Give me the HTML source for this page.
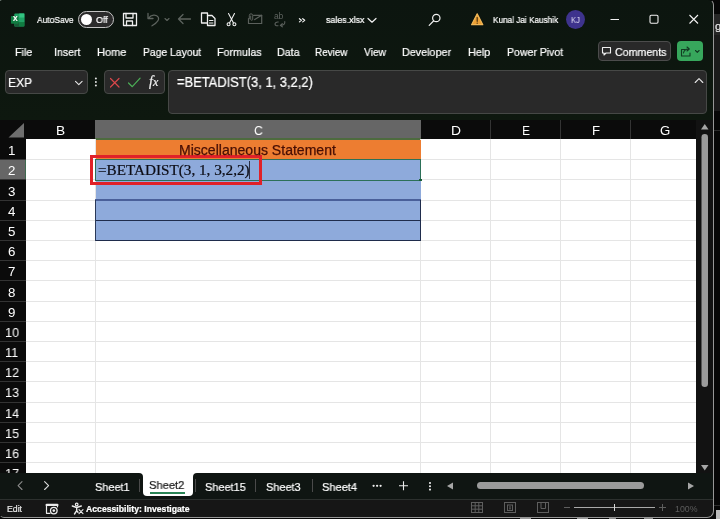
<!DOCTYPE html>
<html>
<head>
<meta charset="utf-8">
<title>sales.xlsx - Excel</title>
<style>
html,body{margin:0;padding:0;}
body{width:720px;height:519px;overflow:hidden;background:#070707;position:relative;font-family:"Liberation Sans",sans-serif;color:#fff;}
.abs{position:absolute;}
#win{position:absolute;left:0;top:0;width:713px;height:517px;background:linear-gradient(180deg,#0c150f 0px,#0e180f 120px);border-radius:2px 5px 6px 4px;overflow:hidden;}
#winborder{position:absolute;left:-1px;top:-1px;width:713px;height:517px;border:1px solid #979797;border-left-color:transparent;border-top-color:transparent;border-radius:3px 6px 7px 5px;box-sizing:content-box;pointer-events:none;}
.t{position:absolute;white-space:nowrap;line-height:1;transform-origin:0 0;will-change:transform;-webkit-text-stroke:0.22px;}
.box{position:absolute;background:#292929;border:1px solid #464846;border-radius:4px;box-sizing:border-box;}
.vl{position:absolute;top:139px;width:1px;height:334px;background:#e5e5e5;}
.hl{position:absolute;left:26px;width:670px;height:1px;background:#e5e5e5;}
.sep{position:absolute;top:479px;width:1px;height:13px;background:#4a4a4a;}
</style>
</head>
<body>
<!-- desktop / other window peeking at the right edge -->
<div class="abs" style="left:714px;top:14px;width:6px;height:21px;background:#262626;"></div>
<div class="abs" style="left:714px;top:35px;width:6px;height:76px;background:#1b1b1b;"></div>
<div class="abs" style="left:714px;top:130px;width:6px;height:1px;background:#2a2a2a;"></div>
<div class="abs" style="left:714px;top:505px;width:6px;height:1px;background:#2e2e2e;"></div>
<div class="abs" style="left:716px;top:510px;width:4px;height:9px;background:#bdbdbd;"></div>
<div class="t" style="left:714.5px;top:20.500px;font-size:11.5px;color:#e8e8e8">g</div>
<div class="abs" style="left:0;top:0;width:2px;height:1px;background:#8d9a92;"></div>
<div class="abs" style="left:520px;top:518px;width:11px;height:1px;background:#9a9a9a;"></div>
<div class="abs" style="left:577px;top:518px;width:11px;height:1px;background:#9a9a9a;"></div>
<div class="abs" style="left:609px;top:518px;width:7px;height:1px;background:#8a8a8a;"></div>
<div class="abs" style="left:644px;top:518px;width:9px;height:1px;background:#8a8a8a;"></div>
<div id="win">
<!-- title bar -->
<svg class="abs" style="left:10.400px;top:11.600px" width="16.300" height="16.300" viewBox="0 0 17 17">
  <rect x="4.5" y="1.5" width="10.500" height="13.500" rx="1" fill="#21a366"/>
  <rect x="9.700" y="1.500" width="5.300" height="4.500" fill="#33c481"/>
  <rect x="9.700" y="6" width="5.300" height="4.500" fill="#21a366"/>
  <rect x="9.700" y="10.500" width="5.300" height="4.500" fill="#107c41"/>
  <rect x="4.500" y="10.500" width="5.200" height="4.500" fill="#185c37"/>
  <rect x="1" y="4.300" width="8" height="8" rx="0.800" fill="#107c41"/>
</svg>
<div class="t" style="left:12.700px;top:16.400px;font-size:6.800px;font-weight:bold;color:#fff">X</div>
<!-- autosave toggle -->
<div class="abs" style="left:78px;top:11px;width:36px;height:17px;border:1px solid #c4c4c4;border-radius:9px;box-sizing:border-box;background:#2b2b2b;"></div>
<div class="abs" style="left:80.800px;top:13.500px;width:11.500px;height:11.500px;border-radius:6px;background:#fff;"></div>
<!-- quick access icons -->
<svg class="abs" style="left:120px;top:10px" width="190" height="20" fill="none" stroke-linecap="round" stroke-linejoin="round">
  <!-- save -->
  <g stroke="#f0f0f0" stroke-width="1.300">
    <path d="M3.500 3.500h10.500l2.500 0v12h-13z"/>
    <path d="M6 3.500v4.500h7v-4.500"/>
    <path d="M6.500 15.500v-4.500h6v4.500"/>
  </g>
  <!-- undo -->
  <g stroke="#5d635e" stroke-width="1.300">
    <path d="M28 3.500v5h5"/>
    <path d="M28.500 8.300c2.500-4 8-4.300 9.800-1c1.500 3-1.500 5.700-6.300 8.500"/>
    <path d="M45 8.500l2 2l2-2" stroke-width="1.100"/>
  </g>
  <!-- back arrow -->
  <g stroke="#5d635e" stroke-width="1.300">
    <path d="M58.500 9h12M63 4.500l-4.500 4.500l4.500 4.500"/>
  </g>
  <!-- copy / paste -->
  <g stroke="#f0f0f0" stroke-width="1.300">
    <path d="M87 13h-5.500v-10h6v2.500"/>
    <path d="M87.500 5.500h4.500l3 3v7h-7.500z"/>
    <path d="M89.500 10.500h3.500M89.500 13h3.500" stroke-width="1"/>
  </g>
  <!-- scissors -->
  <g stroke="#f0f0f0" stroke-width="1.100">
    <path d="M108.500 3.500l5 9.500M114.500 3.500l-5 9.500"/>
    <circle cx="108.600" cy="14.300" r="1.500"/><circle cx="114.400" cy="14.300" r="1.500"/>
  </g>
  <!-- mail -->
  <g stroke="#5b605c" stroke-width="1.200">
    <path d="M133.500 5.300h8.200v8.200h-13.200v-5"/>
    <path d="M141.700 5.300l-7 4.300"/>
    <path d="M129.300 8.800v-3.300a1.700 1.700 0 0 1 3.400 0v3.800a1 1 0 0 1-2 0v-3.300" stroke-width="1"/>
  </g>
  <!-- translate -->
  <g stroke="#5b605c" stroke-width="1.100">
    <path d="M158.300 12c-1.800-.2-3.300.6-3.300 2c0 1.300 1.400 2 3 1.700"/>
    <path d="M160.300 15.300c3.500.3 4.800-1.500 4.500-3.700M160.300 15.300l2-1.700M160.300 15.300l2 1.500"/>
  </g>
  <!-- overflow >> -->
  <g stroke="#f2f2f2" stroke-width="1.150">
    <path d="M179.400 8.700l2 1.600l-2 1.600M182.700 8.700l2 1.600l-2 1.600"/>
  </g>
</svg>
<div class="t" style="left:273.800px;top:12px;font-size:8.500px;color:#5f6460;-webkit-text-stroke:0;letter-spacing:-0.2px">ab</div>
<!-- filename chevron, search, warning -->
<svg class="abs" style="left:360px;top:8px" width="130" height="22" fill="none" stroke-linecap="round" stroke-linejoin="round">
  <path d="M8 10.500l4 3.700l4-3.700" stroke="#f0f0f0" stroke-width="1.200"/>
  <circle cx="76.300" cy="10" r="3.700" stroke="#f0f0f0" stroke-width="1.200"/>
  <path d="M73.500 13l-4.300 4.300" stroke="#f0f0f0" stroke-width="1.200"/>
  <path d="M117.200 5.800l5.600 10.900h-11.200z" fill="#eda034" stroke="#f2b95a" stroke-width="1.200"/>
  <path d="M117.200 9.500v3.800" stroke="#4a3210" stroke-width="1.200"/><circle cx="117.200" cy="15.200" r="0.650" fill="#4a3210"/>
</svg>
<div class="abs" style="left:565.600px;top:9.600px;width:19.800px;height:19.800px;border-radius:10px;background:#3e338d;"></div>
<!-- window controls -->
<svg class="abs" style="left:605px;top:10px" width="100" height="20" fill="none" stroke="#f2f2f2" stroke-width="1.100">
  <path d="M5.500 9.500h8.500"/>
  <rect x="45" y="5.300" width="8" height="8" rx="1.200"/>
  <path d="M84.500 5l8.500 8.500M93 5l-8.500 8.500"/>
</svg>

<!-- ribbon tabs row -->
<div class="box" style="left:598px;top:41px;width:73px;height:20px;background:#292929;border-color:#4c4c4c;border-radius:4px"></div>
<svg class="abs" style="left:600px;top:45px" width="14" height="12" fill="none" stroke="#f0f0f0" stroke-width="1.100" stroke-linejoin="round"><path d="M2.500 2.500h8v5.500h-4.500l-2 2v-2h-1.500z"/></svg>
<div class="abs" style="left:677.300px;top:41px;width:25.700px;height:20px;background:#37a75c;border-radius:4px;"></div>
<svg class="abs" style="left:679px;top:45px" width="24" height="13" fill="none" stroke="#123a22" stroke-width="1.100" stroke-linejoin="round" stroke-linecap="round">
  <path d="M6 4.500h-3.500v6.500h8.500v-3"/><path d="M4.500 8c.5-2.500 2.500-4 5-4M8 2l2.300 2l-2.300 2"/>
  <path d="M16.500 5.500l1.800 1.800l1.800-1.800"/>
</svg>

<!-- formula bar -->
<div class="box" style="left:5px;top:70px;width:83px;height:24px;"></div>
<svg class="abs" style="left:73px;top:78px" width="12" height="10" fill="none" stroke="#e6e6e6" stroke-width="1.100" stroke-linecap="round" stroke-linejoin="round"><path d="M2.500 3.300l3.300 3.300l3.300-3.300"/></svg>
<svg class="abs" style="left:93px;top:76px" width="6" height="12"><circle cx="2.900" cy="2.600" r="1" fill="#e2e2e2"/><circle cx="2.900" cy="6.100" r="1" fill="#e2e2e2"/><circle cx="2.900" cy="9.600" r="1" fill="#e2e2e2"/></svg>
<div class="box" style="left:104px;top:70px;width:61px;height:24px;"></div>
<svg class="abs" style="left:106px;top:74px" width="40" height="16" fill="none" stroke-width="1.200" stroke-linecap="round" stroke-linejoin="round">
  <path d="M4.500 4.500l8.500 8.500M13 4.500l-8.500 8.500" stroke="#d9474a"/>
  <path d="M22.500 9l3.800 3.700l7.800-8.500" stroke="#4cae57"/>
</svg>
<div class="t" style="left:148.500px;top:74.500px;font-size:14px;font-style:italic;font-family:'Liberation Serif',serif;color:#f0f0f0">f<span style="font-size:12px">x</span></div>
<div class="box" style="left:167.500px;top:70px;width:539.500px;height:43.500px;"></div>
<svg class="abs" style="left:693px;top:76px" width="12" height="9" fill="none" stroke="#e6e6e6" stroke-width="1.100" stroke-linecap="round" stroke-linejoin="round"><path d="M2.200 6.500l3.800-3.800l3.800 3.800"/></svg>
<!-- grid -->
<div class="abs" style="left:0;top:120px;width:696px;height:353px;background:#fff;"></div>
<div class="abs" style="left:0;top:120px;width:713px;height:19px;background:#0b0b0b;"></div>
<div class="abs" style="left:0;top:139px;width:26px;height:334px;background:#0b0b0b;"></div>
<div class="abs" style="left:95px;top:120px;width:1px;height:19px;background:#343434"></div>
<div class="abs" style="left:420px;top:120px;width:1px;height:19px;background:#343434"></div>
<div class="abs" style="left:490px;top:120px;width:1px;height:19px;background:#343434"></div>
<div class="abs" style="left:560px;top:120px;width:1px;height:19px;background:#343434"></div>
<div class="abs" style="left:630px;top:120px;width:1px;height:19px;background:#343434"></div>
<div class="abs" style="left:95px;top:120px;width:326px;height:20px;background:#666666;border-bottom:2px solid #4d6b3e;box-sizing:border-box"></div>
<svg class="abs" style="left:0;top:120px" width="26" height="19"><polygon points="24,3 24,17.5 8.5,17.5" fill="#6e6e6e"/></svg>
<div class="abs" style="left:0;top:159px;width:26px;height:20px;background:#666666;border-right:1px solid #3f6a50;box-sizing:border-box"></div>
<div class="abs" style="left:0;top:159px;width:26px;height:1px;background:#333"></div>
<div class="abs" style="left:0;top:179px;width:26px;height:1px;background:#333"></div>
<div class="abs" style="left:0;top:200px;width:26px;height:1px;background:#333"></div>
<div class="abs" style="left:0;top:220px;width:26px;height:1px;background:#333"></div>
<div class="abs" style="left:0;top:240px;width:26px;height:1px;background:#333"></div>
<div class="abs" style="left:0;top:260px;width:26px;height:1px;background:#333"></div>
<div class="abs" style="left:0;top:280px;width:26px;height:1px;background:#333"></div>
<div class="abs" style="left:0;top:301px;width:26px;height:1px;background:#333"></div>
<div class="abs" style="left:0;top:321px;width:26px;height:1px;background:#333"></div>
<div class="abs" style="left:0;top:341px;width:26px;height:1px;background:#333"></div>
<div class="abs" style="left:0;top:361px;width:26px;height:1px;background:#333"></div>
<div class="abs" style="left:0;top:381px;width:26px;height:1px;background:#333"></div>
<div class="abs" style="left:0;top:402px;width:26px;height:1px;background:#333"></div>
<div class="abs" style="left:0;top:422px;width:26px;height:1px;background:#333"></div>
<div class="abs" style="left:0;top:442px;width:26px;height:1px;background:#333"></div>
<div class="abs" style="left:0;top:462px;width:26px;height:1px;background:#333"></div>
<div class="vl" style="left:95px"></div>
<div class="vl" style="left:420px"></div>
<div class="vl" style="left:490px"></div>
<div class="vl" style="left:560px"></div>
<div class="vl" style="left:630px"></div>
<div class="hl" style="top:159px"></div>
<div class="hl" style="top:179px"></div>
<div class="hl" style="top:200px"></div>
<div class="hl" style="top:220px"></div>
<div class="hl" style="top:240px"></div>
<div class="hl" style="top:260px"></div>
<div class="hl" style="top:280px"></div>
<div class="hl" style="top:301px"></div>
<div class="hl" style="top:321px"></div>
<div class="hl" style="top:341px"></div>
<div class="hl" style="top:361px"></div>
<div class="hl" style="top:381px"></div>
<div class="hl" style="top:402px"></div>
<div class="hl" style="top:422px"></div>
<div class="hl" style="top:442px"></div>
<div class="hl" style="top:462px"></div>
<!-- cells -->
<div class="abs" style="left:96px;top:139.500px;width:325px;height:20px;background:#ed7d31;"></div>
<div class="abs" style="left:96px;top:159px;width:325px;height:82px;background:#8eaadb;"></div>
<div class="abs" style="left:95px;top:199px;width:326px;height:1.500px;background:#4a609a;"></div>
<div class="abs" style="left:95px;top:220px;width:326px;height:1px;background:#1f2c4c;"></div>
<div class="abs" style="left:95px;top:240px;width:326px;height:1px;background:#1f2c4c;"></div>
<div class="abs" style="left:95px;top:200px;width:1px;height:41px;background:#2a3858;"></div>
<div class="abs" style="left:420px;top:200px;width:1px;height:41px;background:#1f2c4c;"></div>
<div class="abs" style="left:95px;top:159px;width:326px;height:22px;border:1.500px solid #2c7058;border-right-width:1px;box-sizing:border-box;"></div>
<div class="abs" style="left:419px;top:178.500px;width:3px;height:2.500px;background:#1b5e3a;"></div>
<div class="abs" style="left:249px;top:161px;width:1px;height:17.500px;background:#2a2f45;"></div>
<div class="abs" style="left:90px;top:154.500px;width:172px;height:30.500px;border:3px solid #e02128;box-sizing:border-box;"></div>
<div class="t" style="left:56.27px;top:123.7px;font-size:13.2px;color:#fff;font-family:'Liberation Sans',sans-serif;-webkit-text-stroke:0;transform:scaleX(1.04)">B</div>
<div class="t" style="left:254.14px;top:123.7px;font-size:13.2px;color:#fff;font-family:'Liberation Sans',sans-serif;-webkit-text-stroke:0;transform:scaleX(0.9293)">C</div>
<div class="t" style="left:450.75px;top:123.7px;font-size:13.2px;color:#fff;font-family:'Liberation Sans',sans-serif;-webkit-text-stroke:0;transform:scaleX(1.05)">D</div>
<div class="t" style="left:521.79px;top:123.7px;font-size:13.2px;color:#fff;font-family:'Liberation Sans',sans-serif;-webkit-text-stroke:0;transform:scaleX(0.9103)">E</div>
<div class="t" style="left:591.82px;top:123.7px;font-size:13.2px;color:#fff;font-family:'Liberation Sans',sans-serif;-webkit-text-stroke:0;transform:scaleX(0.9846)">F</div>
<div class="t" style="left:659.94px;top:123.7px;font-size:13.2px;color:#fff;font-family:'Liberation Sans',sans-serif;-webkit-text-stroke:0;transform:scaleX(1.0031)">G</div>
<div class="t" style="left:8.42px;top:143.85px;font-size:13.3px;color:#fff;font-family:'Liberation Sans',sans-serif;-webkit-text-stroke:0;transform:scaleX(0.95)">1</div>
<div class="t" style="left:7.94px;top:164.35px;font-size:13.3px;color:#fff;font-family:'Liberation Sans',sans-serif;-webkit-text-stroke:0;transform:scaleX(0.95)">2</div>
<div class="t" style="left:7.97px;top:184.75px;font-size:13.3px;color:#fff;font-family:'Liberation Sans',sans-serif;-webkit-text-stroke:0;transform:scaleX(0.95)">3</div>
<div class="t" style="left:8.1px;top:205.15px;font-size:13.3px;color:#fff;font-family:'Liberation Sans',sans-serif;-webkit-text-stroke:0;transform:scaleX(0.95)">4</div>
<div class="t" style="left:7.99px;top:224.55px;font-size:13.3px;color:#fff;font-family:'Liberation Sans',sans-serif;-webkit-text-stroke:0;transform:scaleX(0.95)">5</div>
<div class="t" style="left:7.86px;top:244.95px;font-size:13.3px;color:#fff;font-family:'Liberation Sans',sans-serif;-webkit-text-stroke:0;transform:scaleX(0.95)">6</div>
<div class="t" style="left:7.94px;top:265.35px;font-size:13.3px;color:#fff;font-family:'Liberation Sans',sans-serif;-webkit-text-stroke:0;transform:scaleX(0.95)">7</div>
<div class="t" style="left:8.04px;top:285.75px;font-size:13.3px;color:#fff;font-family:'Liberation Sans',sans-serif;-webkit-text-stroke:0;transform:scaleX(0.95)">8</div>
<div class="t" style="left:8.04px;top:306.15px;font-size:13.3px;color:#fff;font-family:'Liberation Sans',sans-serif;-webkit-text-stroke:0;transform:scaleX(0.95)">9</div>
<div class="t" style="left:4.86px;top:325.65px;font-size:13.3px;color:#fff;font-family:'Liberation Sans',sans-serif;-webkit-text-stroke:0;transform:scaleX(0.95)">10</div>
<div class="t" style="left:5.33px;top:345.85px;font-size:13.3px;color:#fff;font-family:'Liberation Sans',sans-serif;-webkit-text-stroke:0;transform:scaleX(0.95)">11</div>
<div class="t" style="left:4.97px;top:366.05px;font-size:13.3px;color:#fff;font-family:'Liberation Sans',sans-serif;-webkit-text-stroke:0;transform:scaleX(0.95)">12</div>
<div class="t" style="left:4.86px;top:386.25px;font-size:13.3px;color:#fff;font-family:'Liberation Sans',sans-serif;-webkit-text-stroke:0;transform:scaleX(0.95)">13</div>
<div class="t" style="left:4.51px;top:407.15px;font-size:13.3px;color:#fff;font-family:'Liberation Sans',sans-serif;-webkit-text-stroke:0;transform:scaleX(0.95)">14</div>
<div class="t" style="left:4.86px;top:426.65px;font-size:13.3px;color:#fff;font-family:'Liberation Sans',sans-serif;-webkit-text-stroke:0;transform:scaleX(0.95)">15</div>
<div class="t" style="left:4.86px;top:446.85px;font-size:13.3px;color:#fff;font-family:'Liberation Sans',sans-serif;-webkit-text-stroke:0;transform:scaleX(0.95)">16</div>
<div class="t" style="left:4.97px;top:467.05px;font-size:13.3px;color:#fff;font-family:'Liberation Sans',sans-serif;-webkit-text-stroke:0;transform:scaleX(0.95)">17</div>
<div class="t" style="left:178.9px;top:142.82px;font-size:14px;color:#470f05;font-family:'Liberation Sans',sans-serif;-webkit-text-stroke:0.25px #470f05;transform:scaleX(1.0029)">Miscellaneous Statement</div>
<div class="t" style="left:97.98px;top:162.75px;font-size:15px;color:#0c0c14;font-family:'Liberation Serif',serif;transform:scaleX(1.0127)">=BETADIST(3, 1, 3,2,2)</div>
<!-- vertical scrollbar -->
<svg class="abs" style="left:696px;top:120px" width="17" height="353">
  <rect width="17" height="353" fill="#121212"/>
  <polygon points="5,9.500 12.500,9.500 8.750,4" fill="#a6a6a6"/>
  <rect x="5.500" y="14" width="6.500" height="253" rx="3.200" fill="#9b9b9b"/>
  <polygon points="5,345 12.500,345 8.750,350.500" fill="#a6a6a6"/>
</svg>
<!-- tab bar -->
<div class="abs" style="left:135px;top:473px;width:66px;height:6px;background:#fff;"></div>
<div class="abs" style="left:0;top:473px;width:143px;height:26px;background:#0f1512;border-top-right-radius:4px;"></div>
<div class="abs" style="left:143px;top:479px;width:50px;height:20px;background:#0f1512;"></div>
<div class="abs" style="left:192.500px;top:473px;width:520.500px;height:26px;background:#0f1512;border-top-left-radius:4px;"></div>
<div class="abs" style="left:0;top:499px;width:713px;height:1px;background:#2c302e;"></div>
<div class="abs" style="left:0;top:500px;width:713px;height:17px;background:#161616;"></div>
<svg class="abs" style="left:14px;top:479px" width="40" height="14" fill="none" stroke-width="1.100" stroke-linecap="round" stroke-linejoin="round">
  <polyline points="8,2.700 4.100,6.600 8,10.500" stroke="#8c8c8c"/>
  <polyline points="30.600,2.700 34.600,6.600 30.600,10.500" stroke="#dcdcdc"/>
</svg>
<div class="sep" style="left:139px"></div>
<div class="abs" style="left:143px;top:473px;width:49.500px;height:23px;background:#fff;border-radius:0 0 4px 4px;"></div>
<div class="abs" style="left:149.500px;top:492px;width:35.500px;height:2px;background:#2a8556;"></div>
<div class="sep" style="left:195px"></div>
<div class="sep" style="left:255px"></div>
<div class="sep" style="left:312px"></div>
<svg class="abs" style="left:370px;top:478px" width="90" height="16">
  <circle cx="3.600" cy="7.800" r="1.150" fill="#ececec"/><circle cx="7.100" cy="7.800" r="1.150" fill="#ececec"/><circle cx="10.600" cy="7.800" r="1.150" fill="#ececec"/>
  <path d="M29 7.800h9M33.500 3.300v9" stroke="#ececec" stroke-width="1.100"/>
  <circle cx="60" cy="5" r="1.050" fill="#ececec"/><circle cx="60" cy="8.300" r="1.050" fill="#ececec"/><circle cx="60" cy="11.600" r="1.050" fill="#ececec"/>
  <polygon points="83,4.500 83,11.500 77,8" fill="#a6a6a6"/>
</svg>
<div class="abs" style="left:477px;top:482px;width:167px;height:7px;border-radius:4px;background:#9b9b9b;"></div>
<svg class="abs" style="left:686px;top:480px" width="10" height="12"><polygon points="2,2.500 2,9.500 8,6" fill="#a6a6a6"/></svg>
<!-- status bar icons -->
<svg class="abs" style="left:44px;top:501px" width="42" height="14" fill="none" stroke="#ececec" stroke-width="1.200" stroke-linejoin="round" stroke-linecap="round">
  <path d="M6 12.300h-3.500v-9h11v2.500"/><path d="M2.500 4h11" stroke-width="2"/>
  <circle cx="9.800" cy="9.600" r="3.300" stroke-width="1.300"/><circle cx="9.800" cy="9.600" r="1.300" fill="#ececec" stroke="none"/>
  <circle cx="32.700" cy="3.500" r="1.300"/><path d="M28.300 5l4.400 1.500l4.600-1.500M32.700 6.500v3.200l-2.200 3.300M32.700 9.700l1.300 1.500" stroke-width="1.400"/>
  <path d="M35 8.700l4 4M39 8.700l-4 4" stroke-width="1.100"/>
</svg>
<svg class="abs" style="left:468px;top:500px" width="240" height="14" fill="none" stroke="#5e5e5e" stroke-width="1">
  <rect x="3.500" y="2.500" width="11" height="10"/><path d="M3.500 5.800h11M3.500 9.200h11M7.200 2.500v10M10.800 2.500v10"/>
  <rect x="36.500" y="2.500" width="11" height="10"/><rect x="39.500" y="5" width="5" height="5.500"/><path d="M41 7h2M41 8.800h2"/>
  <rect x="69.500" y="2.500" width="11" height="10"/><path d="M73 2.500v6h4.500v-6"/>
  <path d="M96 7.500h6"/><path d="M106 7.500h81" stroke="#a9a9a9"/><path d="M146.500 4v7" stroke="#d6d6d6"/><path d="M191 7.500h7M194.500 4v7"/>
</svg>
<div class="t" style="left:36.97px;top:15.4px;font-size:9.6px;color:#fff;font-family:'Liberation Sans',sans-serif;transform:scaleX(0.8786)">AutoSave</div>
<div class="t" style="left:95.92px;top:15.4px;font-size:9.6px;color:#fff;font-family:'Liberation Sans',sans-serif;transform:scaleX(0.9313)">Off</div>
<div class="t" style="left:325.57px;top:15.4px;font-size:9.6px;color:#fff;font-family:'Liberation Sans',sans-serif;transform:scaleX(0.9261)">sales.xlsx</div>
<div class="t" style="left:492.89px;top:15.4px;font-size:9.6px;color:#fff;font-family:'Liberation Sans',sans-serif;transform:scaleX(0.8539)">Kunal Jai Kaushik</div>
<div class="t" style="left:571.13px;top:15.75px;font-size:8.5px;color:#dedaf3;font-family:'Liberation Sans',sans-serif;-webkit-text-stroke:0;transform:scaleX(0.8941)">KJ</div>
<div class="t" style="left:15.26px;top:47.2px;font-size:11.4px;color:#fff;font-family:'Liberation Sans',sans-serif;transform:scaleX(0.9433)">File</div>
<div class="t" style="left:53.57px;top:47.2px;font-size:11.4px;color:#fff;font-family:'Liberation Sans',sans-serif;transform:scaleX(0.9273)">Insert</div>
<div class="t" style="left:96.6px;top:47.2px;font-size:11.4px;color:#fff;font-family:'Liberation Sans',sans-serif;transform:scaleX(0.9697)">Home</div>
<div class="t" style="left:142.91px;top:47.2px;font-size:11.4px;color:#fff;font-family:'Liberation Sans',sans-serif;transform:scaleX(0.9095)">Page Layout</div>
<div class="t" style="left:217.06px;top:47.2px;font-size:11.4px;color:#fff;font-family:'Liberation Sans',sans-serif;transform:scaleX(0.9413)">Formulas</div>
<div class="t" style="left:276.63px;top:47.2px;font-size:11.4px;color:#fff;font-family:'Liberation Sans',sans-serif;transform:scaleX(0.9385)">Data</div>
<div class="t" style="left:314.67px;top:47.2px;font-size:11.4px;color:#fff;font-family:'Liberation Sans',sans-serif;transform:scaleX(0.8723)">Review</div>
<div class="t" style="left:364.3px;top:47.2px;font-size:11.4px;color:#fff;font-family:'Liberation Sans',sans-serif;transform:scaleX(0.898)">View</div>
<div class="t" style="left:402.05px;top:47.2px;font-size:11.4px;color:#fff;font-family:'Liberation Sans',sans-serif;transform:scaleX(0.9458)">Developer</div>
<div class="t" style="left:467.86px;top:47.2px;font-size:11.4px;color:#fff;font-family:'Liberation Sans',sans-serif;transform:scaleX(0.953)">Help</div>
<div class="t" style="left:506.51px;top:47.2px;font-size:11.4px;color:#fff;font-family:'Liberation Sans',sans-serif;transform:scaleX(0.9239)">Power Pivot</div>
<div class="t" style="left:614.69px;top:47.2px;font-size:11.4px;color:#fff;font-family:'Liberation Sans',sans-serif;transform:scaleX(0.9361)">Comments</div>
<div class="t" style="left:8.01px;top:76.4px;font-size:13px;color:#fff;font-family:'Liberation Sans',sans-serif;transform:scaleX(0.9279)">EXP</div>
<div class="t" style="left:176.8px;top:76.25px;font-size:13.8px;color:#fff;font-family:'Liberation Sans',sans-serif;transform:scaleX(0.9363)">=BETADIST(3, 1, 3,2,2)</div>
<div class="t" style="left:95.33px;top:480.65px;font-size:11.6px;color:#fff;font-family:'Liberation Sans',sans-serif;transform:scaleX(0.9427)">Sheet1</div>
<div class="t" style="left:148.85px;top:478.65px;font-size:11.6px;color:#1a1a1a;font-family:'Liberation Sans',sans-serif;transform:scaleX(0.9617)">Sheet2</div>
<div class="t" style="left:204.88px;top:480.65px;font-size:11.6px;color:#fff;font-family:'Liberation Sans',sans-serif;transform:scaleX(0.9444)">Sheet15</div>
<div class="t" style="left:266.48px;top:480.65px;font-size:11.6px;color:#fff;font-family:'Liberation Sans',sans-serif;transform:scaleX(0.9435)">Sheet3</div>
<div class="t" style="left:321.87px;top:480.65px;font-size:11.6px;color:#fff;font-family:'Liberation Sans',sans-serif;transform:scaleX(0.9524)">Sheet4</div>
<div class="t" style="left:6.7px;top:504.75px;font-size:8.4px;color:#e6e6e6;font-family:'Liberation Sans',sans-serif;transform:scaleX(1.0388)">Edit</div>
<div class="t" style="left:86.17px;top:504.75px;font-size:8.4px;color:#fff;font-family:'Liberation Sans',sans-serif;font-weight:bold;transform:scaleX(1.0341)">Accessibility: Investigate</div>
<div class="t" style="left:675.21px;top:504.9px;font-size:8.4px;color:#5c5c5c;font-family:'Liberation Sans',sans-serif;-webkit-text-stroke:0;transform:scaleX(1.0488)">100%</div>
</div>
<div id="winborder"></div>
</body>
</html>
